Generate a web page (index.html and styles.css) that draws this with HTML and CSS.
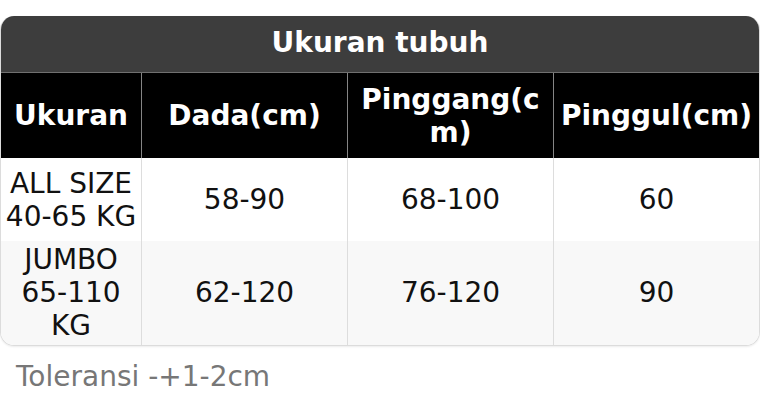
FILE: index.html
```html
<!DOCTYPE html>
<html lang="id">
<head>
<meta charset="utf-8">
<title>Ukuran tubuh</title>
<link rel="stylesheet" href="styles.css">
</head>
<body>
<div class="page">
  <div class="sheet">
    <div class="sheet-title">Ukuran tubuh</div>
    <table class="size-table">
      <colgroup>
        <col class="c1"><col class="c2"><col class="c3"><col class="c4">
      </colgroup>
      <thead>
        <tr>
          <th>Ukuran</th>
          <th>Dada(cm)</th>
          <th>Pinggang(cm)</th>
          <th>Pinggul(cm)</th>
        </tr>
      </thead>
      <tbody>
        <tr class="row-a">
          <td>ALL SIZE 40-65 KG</td>
          <td>58-90</td>
          <td>68-100</td>
          <td>60</td>
        </tr>
        <tr class="row-b">
          <td>JUMBO 65-110 KG</td>
          <td>62-120</td>
          <td>76-120</td>
          <td>90</td>
        </tr>
      </tbody>
    </table>
  </div>
  <p class="note">Toleransi -+1-2cm</p>
</div>
</body>
</html>
```

FILE: styles.css
```css
* { box-sizing: border-box; }

html, body {
  margin: 0;
  padding: 0;
  background: #ffffff;
}

body {
  font-family: "DejaVu Sans", "Noto Sans", sans-serif;
  font-size: 28px;
  line-height: normal;
  color: #111111;
}

.page {
  padding-top: 16px;
  width: 760px;
}

.sheet {
  border: 1px solid #dcdcdc;
  border-top: 0;
  border-radius: 14px;
  overflow: hidden;
  box-shadow: 0 1px 2px rgba(0, 0, 0, 0.08);
}

.sheet-title {
  background: #3d3d3d;
  color: #ffffff;
  font-weight: bold;
  text-align: center;
  height: 57px;
  padding-top: 10px;
  border-bottom: 1px solid #707070;
}

.size-table {
  width: 100%;
  table-layout: fixed;
  border-collapse: separate;
  border-spacing: 0;
}

.c1 { width: 140px; }
.c2 { width: 206px; }
.c3 { width: 206px; }
.c4 { width: 206px; }

.size-table th,
.size-table td {
  padding: 2px 5px;
  text-align: center;
  vertical-align: middle;
  overflow-wrap: anywhere;
}

.size-table td:first-child {
  padding-left: 2px;
  padding-right: 2px;
}

.size-table th + th,
.size-table td + td {
  border-left: 1px solid #dddddd;
}

.size-table thead tr {
  height: 85px;
}

.size-table th {
  background: #000000;
  color: #ffffff;
  font-weight: bold;
}

.size-table th + th {
  border-left-color: #858585;
}

.row-a {
  height: 83px;
  background: #ffffff;
}

.row-b {
  background: #f8f8f8;
}

.row-b td {
  padding-top: 2px;
  padding-bottom: 3px;
}

.note {
  margin: 14px 0 0;
  padding-left: 16px;
  color: #777777;
}
```
